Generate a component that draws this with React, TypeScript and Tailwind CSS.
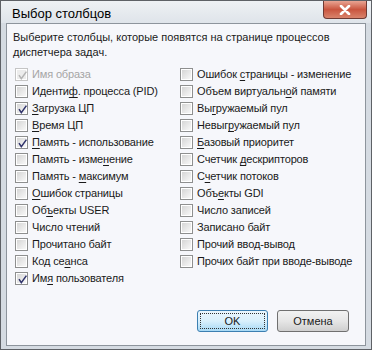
import React from "react";

type Item = { label: string; key?: number; checked?: boolean; disabled?: boolean };

const LEFT: Item[] = [
  { label: "Имя образа", checked: true, disabled: true },
  { label: "Идентиф. процесса (PID)", key: 6 },
  { label: "Загрузка ЦП", key: 0, checked: true },
  { label: "Время ЦП", key: 0 },
  { label: "Память - использование", key: 0, checked: true },
  { label: "Память - изменение", key: 13 },
  { label: "Память - максимум", key: 9 },
  { label: "Ошибок страницы", key: 0 },
  { label: "Объекты USER", key: 2 },
  { label: "Число чтений" },
  { label: "Прочитано байт" },
  { label: "Код сеанса", key: 6 },
  { label: "Имя пользователя", key: 2, checked: true },
];

const RIGHT: Item[] = [
  { label: "Ошибок страницы - изменение", key: 7 },
  { label: "Объем виртуальной памяти", key: 15 },
  { label: "Выгружаемый пул", key: 2 },
  { label: "Невыгружаемый пул", key: 5 },
  { label: "Базовый приоритет", key: 0 },
  { label: "Счетчик дескрипторов", key: 8 },
  { label: "Счетчик потоков", key: 1 },
  { label: "Объекты GDI", key: 3 },
  { label: "Число записей" },
  { label: "Записано байт" },
  { label: "Прочий ввод-вывод" },
  { label: "Прочих байт при вводе-выводе" },
];

function Label({ text, k }: { text: string; k?: number }) {
  if (k === undefined) return <>{text}</>;
  return (
    <>
      {text.slice(0, k)}
      <span className="underline underline-offset-2">{text[k]}</span>
      {text.slice(k + 1)}
    </>
  );
}

function CheckBox({ checked, disabled }: { checked?: boolean; disabled?: boolean }) {
  return (
    <span
      className={`relative flex size-[13px] shrink-0 items-center justify-center border ${
        disabled ? "border-[#c5c5c5]" : "border-[#8e8f8f]"
      } bg-white p-px`}
    >
      <span
        className={`size-full ${
          disabled ? "bg-[#ececec]" : "bg-gradient-to-br from-[#d6d6d6] to-[#f8f8f8]"
        }`}
      />
      {checked && (
        <svg viewBox="0 0 11 11" className="absolute left-px top-px size-[11px]">
          <path
            d="M2 5.2 L4.3 8.6 L9.4 1.6"
            fill="none"
            stroke={disabled ? "#b4b4b4" : "#30336b"}
            strokeWidth="1.5"
          />
        </svg>
      )}
    </span>
  );
}

function Row({ item }: { item: Item }) {
  return (
    <div className="flex h-[17px] items-center gap-[4px]">
      <CheckBox checked={item.checked} disabled={item.disabled} />
      <span
        className={`whitespace-nowrap tracking-[-0.15px] ${
          item.disabled ? "text-[#a5a5a5]" : "text-[#1a1a1a]"
        }`}
      >
        <Label text={item.label} k={item.key} />
      </span>
    </div>
  );
}

export default function App() {
  return (
    <div
      className="flex h-[350px] w-[372px] flex-col border border-[#5e6166] bg-[#d5dbe2] text-[11px] leading-[15px]"
      style={{ fontFamily: '"Liberation Sans", Arial, sans-serif' }}
    >
      <div className="flex h-[22px] shrink-0 items-start justify-between bg-gradient-to-b from-[#eef1f4] to-[#dfe4ea] pl-[11px] pr-[4px]">
        <span className="pt-[5px] text-[13px] leading-[16px] text-black">Выбор столбцов</span>
        <div className="flex h-[18px] w-[44px] items-center justify-center rounded-b-[4px] border border-t-0 border-[#6e3a34] bg-gradient-to-b from-[#e8a493] via-[#c9553f] to-[#d9836c]">
          <svg viewBox="0 0 12 10" className="h-[10px] w-[12px]">
            <path d="M2 1 L10 9 M10 1 L2 9" stroke="#ffffff" strokeWidth="2.6" strokeLinecap="round" />
          </svg>
        </div>
      </div>
      <div className="mx-[5px] mb-[3px] flex flex-1 flex-col border border-[#8d949c] bg-[#f6f7fb] px-[6px] pt-[6px]">
        <p className="text-[#1a1a1a]">
          Выберите столбцы, которые появятся на странице процессов
          <br />
          диспетчера задач.
        </p>
        <div className="mt-[6px] grid grid-cols-[165px_1fr] pl-[2px]">
          <div className="flex flex-col">
            {LEFT.map((it) => (
              <Row key={it.label} item={it} />
            ))}
          </div>
          <div className="flex flex-col">
            {RIGHT.map((it) => (
              <Row key={it.label} item={it} />
            ))}
          </div>
        </div>
        <div className="mt-[23px] flex justify-end gap-[9px] pr-[10px]">
          <button className="relative h-[22px] w-[71px] rounded-[3px] border border-[#3c7fb1] bg-gradient-to-b from-[#eaf6fd] via-[#d9f0fc] to-[#a7d9f5] p-[2px] text-[#1a1a1a]">
            <span className="flex h-full w-full items-center justify-center border border-dotted border-[#333]">
              OK
            </span>
          </button>
          <button className="h-[22px] w-[72px] rounded-[3px] border border-[#707070] bg-gradient-to-b from-[#f2f2f2] via-[#e6e6e6] to-[#cfcfcf] text-[#1a1a1a]">
            Отмена
          </button>
        </div>
      </div>
    </div>
  );
}
